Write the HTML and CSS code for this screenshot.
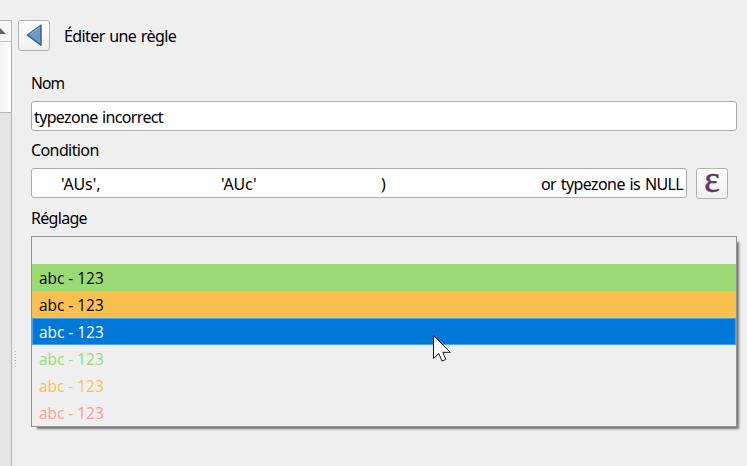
FILE: index.html
```html
<!DOCTYPE html>
<html lang="fr">
<head>
<meta charset="utf-8">
<title>Éditer une règle</title>
<link rel="stylesheet" href="styles.css">
</head>
<body>
<div class="window">
  <aside class="strip">
    <div class="strip-head"><svg width="11" height="20" viewBox="0 0 11 20"><path d="M-6 13 L0 7 L6 13 Z" fill="#606060"/></svg></div>
    <div class="strip-list"></div>
    <div class="strip-rest"></div>
  </aside>
  <div class="splitter"><svg width="3" height="17" viewBox="0 0 3 17"><path d="M1.5 0V17" stroke="#b4b4b4" stroke-dasharray="1 2"/></svg></div>
  <main class="panel">
    <header class="header">
      <button class="tool" aria-label="Retour"><svg width="30" height="29" viewBox="0 0 30 29"><path d="M8.5 14.2 L22 4.2 V24.2 Z" fill="#6d98c9" stroke="#42607f" stroke-width="1.5" stroke-linejoin="round"/><path d="M10.5 13.6 L20.8 6" fill="none" stroke="#9dbbdc" stroke-width="1"/></svg></button>
      <span class="title">Éditer une règle</span>
    </header>
    <section class="form">
      <div class="label nom">Nom</div>
      <div class="field"><span class="value">typezone incorrect</span></div>
      <div class="label condition">Condition</div>
      <div class="row">
        <div class="field expression"><span class="c1">'AUs',</span><span class="c2">'AUc'</span><span class="c3">)</span><span class="c4">or typezone is NULL</span></div>
        <button class="tool epsilon">ε</button>
      </div>
      <div class="label reglage">Réglage</div>
      <div class="list">
        <div class="item"></div>
        <div class="item green">abc - 123</div>
        <div class="item orange">abc - 123</div>
        <div class="item selected">abc - 123</div>
        <div class="item text-green">abc - 123</div>
        <div class="item text-orange">abc - 123</div>
        <div class="item text-red">abc - 123</div>
      </div>
    </section>
  </main>
  <svg class="cursor" width="20" height="28" viewBox="0 0 20 28"><path d="M.5 .5 V23.5 L5.8 18.5 L9 26 L12.8 24.5 L9.8 17.3 H17.3 Z" fill="#fff" stroke="#161625"/></svg>
</div>
</body>
</html>
```
FILE: styles.css
```css
* { box-sizing: border-box; }
body {
  margin: 0;
  background: #efefef;
  color: #000;
  font: 16px/20px "Noto Sans", sans-serif;
  overflow: hidden;
}
svg { display: block; }
.window { position: relative; display: flex; width: 747px; height: 466px; }
.strip {
  display: flex;
  flex-direction: column;
  width: 12px;
  margin-top: 20px;
  border-top: 1px solid #b4b4b4;
  border-right: 1px solid #b4b4b4;
}
.strip-head { height: 21px; border-bottom: 1px solid #c2c2c2; background: #f6f6f6; }
.strip-list { height: 71px; border-bottom: 1px solid #b4b4b4; background: linear-gradient(90deg, #f3f3f3, #fff); }
.strip-rest { flex: 1; background: #e5e5e5; }
.splitter { width: 6px; padding: 351px 0 0 2px; }
.panel { width: 719px; padding-top: 20px; }
.header { display: flex; height: 31px; }
.title { margin: 6px 0 0 14px; letter-spacing: -.6px; word-spacing: 1px; white-space: nowrap; }
.tool {
  width: 32px;
  height: 31px;
  padding: 0;
  border: 1px solid #b1b1b1;
  border-radius: 3px;
  background: linear-gradient(#fefefe, #f0f0f0);
}
.form { padding: 22px 0 0 13px; }
.label { height: 20px; letter-spacing: -.6px; }
.nom { margin-bottom: 8px; font-size: 15.6px; letter-spacing: -.9px; }
.condition { margin: 9px 0 8px; }
.reglage { margin: 9px 0 8px; letter-spacing: -.7px; }
.field {
  height: 30px;
  padding: 5px 2px;
  border: 1px solid #ababab;
  border-radius: 3px;
  background: #fff;
  white-space: nowrap;
  letter-spacing: -.65px;
  word-spacing: 1px;
}
.row { display: flex; gap: 9px; height: 31px; }
.expression { display: grid; grid-template-columns: 160px 160px 160px 1fr; width: 656px; padding-left: 29px; }
.c1, .c2 { letter-spacing: -.1px; }
.c4 { letter-spacing: -.6px; word-spacing: 1.2px; }
.epsilon {
  color: #5c3566;
  font: 37px/20px "Liberation Serif", serif;
  -webkit-text-stroke: .5px #5c3566;
  padding-bottom: 7px;
}
.list {
  height: 191px;
  border: 1px solid #939393;
  box-shadow: 4px 4px 2px -2px #777;
}
.item { height: 27px; padding: 5px 7px 0; font: 15.4px/20px "Open Sans", sans-serif; }
.green { background: #9bd973; }
.orange { background: #fbc04e; }
.selected { padding: 4px 6px 0; border: 1px solid #40a5f4; background: #0078d7; color: #fff; }
.text-green { color: #9bd973; }
.text-orange { color: #fbc04e; }
.text-red { color: #fb9a99; }
.cursor { position: absolute; left: 433px; top: 335px; }
```
